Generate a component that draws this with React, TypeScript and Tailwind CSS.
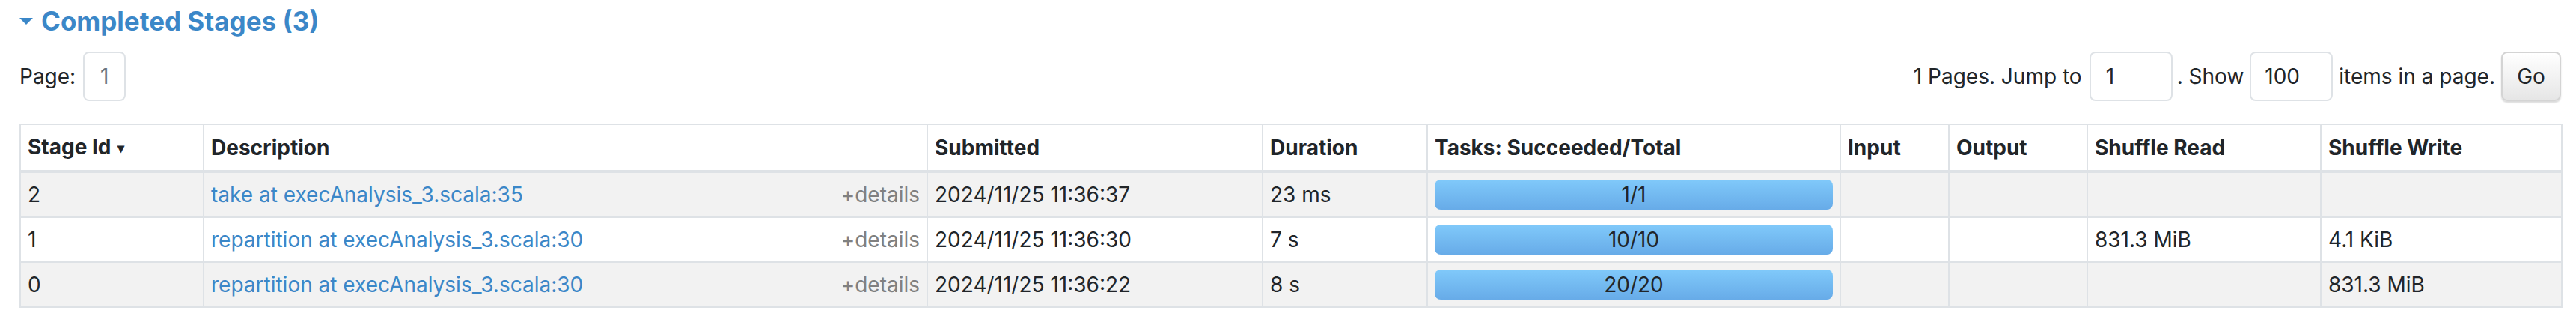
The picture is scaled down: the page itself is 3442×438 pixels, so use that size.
import React from 'react';

type Stage = {
  id: number;
  desc: string;
  submitted: string;
  duration: string;
  tasks: string;
  shuffleRead: string;
  shuffleWrite: string;
};

const stages: Stage[] = [
  { id: 2, desc: 'take at execAnalysis_3.scala:35', submitted: '2024/11/25 11:36:37', duration: '23 ms', tasks: '1/1', shuffleRead: '', shuffleWrite: '' },
  { id: 1, desc: 'repartition at execAnalysis_3.scala:30', submitted: '2024/11/25 11:36:30', duration: '7 s', tasks: '10/10', shuffleRead: '831.3 MiB', shuffleWrite: '4.1 KiB' },
  { id: 0, desc: 'repartition at execAnalysis_3.scala:30', submitted: '2024/11/25 11:36:22', duration: '8 s', tasks: '20/20', shuffleRead: '', shuffleWrite: '831.3 MiB' },
];

const th = 'border-2 border-[#dee2e6] border-b-4 px-[9px] py-[8px] text-left font-bold leading-[42px] align-middle';
const td = 'border-2 border-[#dee2e6] px-[9px] py-[8px] leading-[42px] align-middle whitespace-nowrap';

export default function App() {
  return (
    <div className="min-h-screen bg-white pl-[26px] pr-[20px] text-[28px] text-[#212529]" style={{ fontFamily: 'Inter, "Liberation Sans", sans-serif' }}>
      {/* section title */}
      <div className="flex h-[56px] items-center gap-[11px]">
        <svg width="18" height="10" viewBox="0 0 18 10" className="mt-[2px]">
          <polygon points="0,0 18,0 9,9" fill="#3b87c8" />
        </svg>
        <h4 className="text-[35px] font-bold text-[#3b87c8]">Completed Stages (3)</h4>
      </div>

      {/* paging controls */}
      <div className="mt-[13px] flex h-[66px] items-center justify-between">
        <div className="flex items-center gap-[10px]">
          <span>Page:</span>
          <div className="flex h-[66px] w-[57px] items-center justify-center rounded-[8px] border-2 border-[#dee2e6] text-[#6c757d]">1</div>
        </div>
        <div className="flex items-center">
          <span>1 Pages. Jump to</span>
          <div className="ml-[10px] flex h-[66px] w-[111px] items-center rounded-[8px] border-2 border-[#dee2e6] pl-[20px]">1</div>
          <span className="ml-[6px]">. Show</span>
          <div className="ml-[8px] flex h-[66px] w-[111px] items-center rounded-[8px] border-2 border-[#dee2e6] pl-[18px]">100</div>
          <span className="ml-[8px]">items in a page.</span>
          <button className="ml-[8px] h-[66px] w-[80px] rounded-[8px] border-2 border-[#d4d4d4] bg-gradient-to-b from-white to-[#e6e6e6] shadow-[0_2px_2px_rgba(0,0,0,0.15)]">Go</button>
        </div>
      </div>

      {/* stages table */}
      <table className="mt-[30px] w-full table-fixed border-collapse">
        <colgroup>
          <col className="w-[245px]" />
          <col className="w-[967px]" />
          <col className="w-[448px]" />
          <col className="w-[220px]" />
          <col className="w-[552px]" />
          <col className="w-[145px]" />
          <col className="w-[185px]" />
          <col className="w-[312px]" />
          <col className="w-[322px]" />
        </colgroup>
        <thead>
          <tr>
            <th className={th}>
              Stage Id <span className="ml-[2px] text-[18px] align-middle">▾</span>
            </th>
            <th className={th}>Description</th>
            <th className={th}>Submitted</th>
            <th className={th}>Duration</th>
            <th className={th}>Tasks: Succeeded/Total</th>
            <th className={th}>Input</th>
            <th className={th}>Output</th>
            <th className={th}>Shuffle Read</th>
            <th className={th}>Shuffle Write</th>
          </tr>
        </thead>
        <tbody>
          {stages.map((s, i) => (
            <tr key={s.id} className={i % 2 === 0 ? 'bg-[#f2f2f2]' : 'bg-white'}>
              <td className={td}>{s.id}</td>
              <td className={td}>
                <div className="flex items-center justify-between">
                  <a href="#" className="text-[#3b87c8]">{s.desc}</a>
                  <span className="text-[#808080]">+details</span>
                </div>
              </td>
              <td className={td}>{s.submitted}</td>
              <td className={td}>{s.duration}</td>
              <td className={td}>
                <div className="flex h-[40px] items-center justify-center rounded-[8px] bg-gradient-to-b from-[#80c9fa] to-[#67abe8]">
                  {s.tasks}
                </div>
              </td>
              <td className={td}></td>
              <td className={td}></td>
              <td className={td}>{s.shuffleRead}</td>
              <td className={td}>{s.shuffleWrite}</td>
            </tr>
          ))}
        </tbody>
      </table>
    </div>
  );
}
